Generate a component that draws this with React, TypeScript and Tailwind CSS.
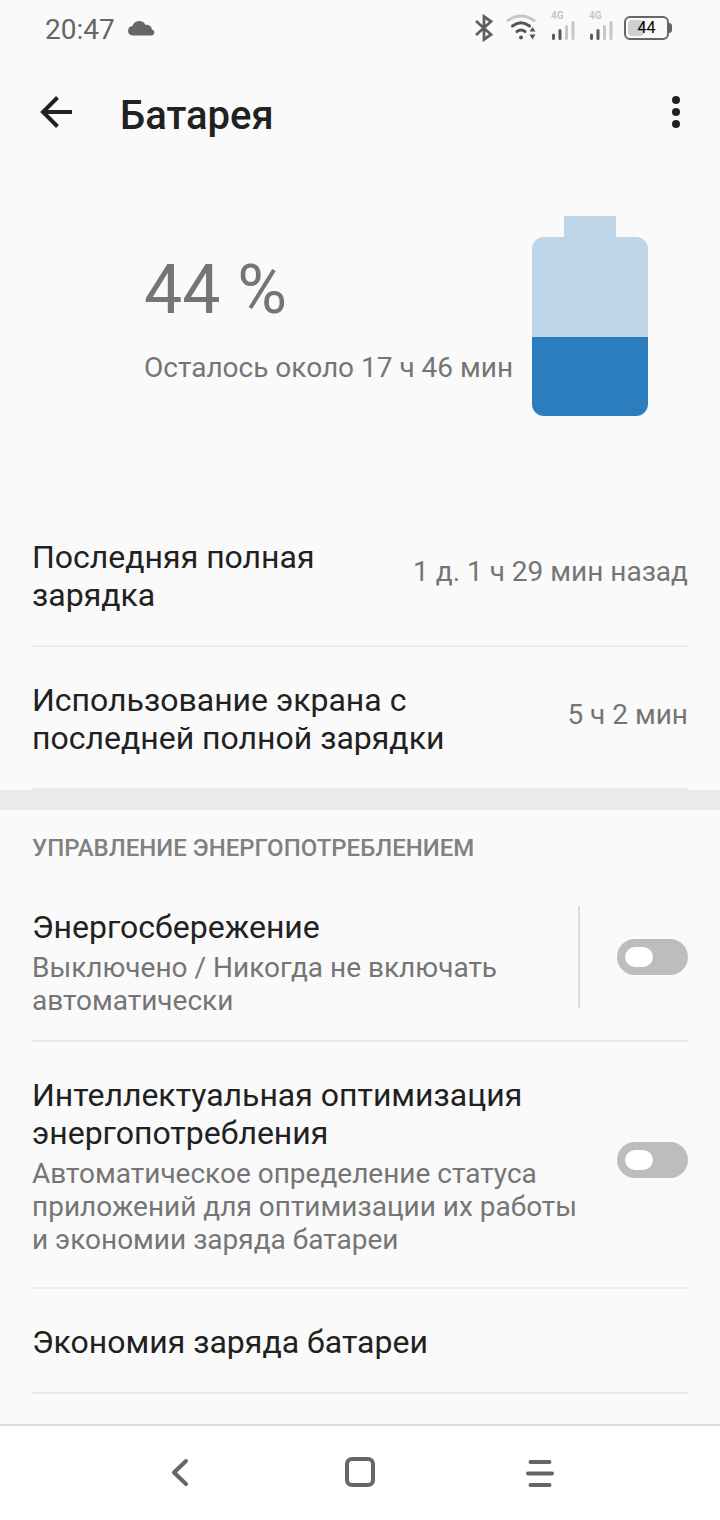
import { useState } from "react";
import type { ReactNode } from "react";

function SignalIcon() {
  return (
    <div className="flex flex-col items-start pb-1">
      <span className="text-[10px] leading-[10px] font-bold text-[#c6c6c6]">4G</span>
      <svg width="24" height="20" viewBox="0 0 24 20" strokeWidth="3" strokeLinecap="round" aria-hidden="true">
        <path d="M2.500 17.500V14M9 17.500V9.500" stroke="#5a5a5a" />
        <path d="M15.500 17.500V5.500M22 17.500V1.500" stroke="#c6c6c6" />
      </svg>
    </div>
  );
}

function StatusBar() {
  return (
    <div className="flex h-14 items-center justify-between pr-12 pl-[45px] text-[#666666]">
      <div className="flex items-center gap-3">
        <span className="pt-1 text-[28px] leading-8">20:47</span>
        <svg width="28" height="16" viewBox="0 0 28 16" fill="currentColor" aria-hidden="true">
          <path d="M5 15.500A4.800 4.800 0 0 1 5.500 6A7 7 0 0 1 18.500 5A5.300 5.300 0 0 1 25 9.500A3.100 3.100 0 0 1 25 15.500Z" />
        </svg>
      </div>

      <div className="flex items-center">
        <svg width="20" height="28" viewBox="0 0 20 28" fill="none" stroke="#5f5f5f" strokeWidth="2.800" aria-hidden="true">
          <path d="M2 7L17 20.500L10 25.500V2.500L17 7.500L2 21" />
        </svg>
        <svg className="ml-3" width="32" height="28" viewBox="0 0 32 28" fill="none" strokeLinecap="round" aria-hidden="true">
          <path d="M2 6.500Q15 -2.500 28 6.500" stroke="#c6c6c6" strokeWidth="3" />
          <path d="M6.500 12Q15 5.500 23.500 12" stroke="#555555" strokeWidth="3" />
          <path d="M11 17.500Q15 14.500 19 17.500" stroke="#555555" strokeWidth="3" />
          <circle cx="15" cy="23.500" r="2" fill="#555555" />
          <path d="M26.500 13L29.500 17.500H23.500ZM26.500 25.500L29.500 20.500H23.500Z" fill="#555555" />
        </svg>
        <div className="ml-[13px] flex gap-[14px]">
          <SignalIcon />
          <SignalIcon />
        </div>
        <div className="ml-[11px] flex items-center">
          <div className="relative flex h-6 w-[45px] items-center justify-center rounded-md border-2 border-[#666666] text-base leading-5 text-black">
            <div className="absolute inset-y-[2px] left-[2px] w-4 rounded-sm bg-[#d0d0d0]" />
            <span className="relative">44</span>
          </div>
          <div className="h-[10px] w-[3px] rounded-r-sm bg-[#666666]" />
        </div>
      </div>
    </div>
  );
}

function Header() {
  return (
    <header className="flex h-28 items-center justify-between px-8 text-[#212121]">
      <div className="flex items-center gap-10">
        <button type="button" aria-label="Назад">
          <svg width="48" height="48" viewBox="0 0 48 48" fill="none" stroke="currentColor" strokeWidth="4" aria-hidden="true">
            <path d="M40 24H11M25.500 9.500L11 24L25.500 38.500" />
          </svg>
        </button>
        <h1 className="pt-2 text-[40px] leading-12 font-medium">Батарея</h1>
      </div>
      <button type="button" aria-label="Ещё">
        <svg width="24" height="48" viewBox="0 0 24 48" fill="currentColor" aria-hidden="true">
          <circle cx="12" cy="12" r="4" />
          <circle cx="12" cy="24" r="4" />
          <circle cx="12" cy="36" r="4" />
        </svg>
      </button>
    </header>
  );
}

function BatterySummary() {
  return (
    <section className="flex items-center justify-between pt-12 pr-[72px] pb-[88px] pl-36 text-[#757575]">
      <div className="pt-[2px]">
        <div className="text-[68px] leading-20">44 %</div>
        <div className="mt-[22px] text-[28px] leading-8">Осталось около 17 ч 46 мин</div>
      </div>
      <svg width="116" height="200" viewBox="0 0 116 200" aria-hidden="true">
        <path d="M32 0H84V21H104A12 12 0 0 1 116 33V121H0V33A12 12 0 0 1 12 21H32Z" fill="#bdd5e7" />
        <path d="M0 121H116V188A12 12 0 0 1 104 200H12A12 12 0 0 1 0 188Z" fill="#2c7dbe" />
      </svg>
    </section>
  );
}

function InfoRow({ title, value }: { title: string; value: string }) {
  return (
    <div className="mx-8 flex items-center justify-between gap-8 border-b-2 border-[#ebebeb] pt-[34px] pb-[31px]">
      <div className="max-w-[420px] text-[32px] leading-[38px] text-[#212121]">{title}</div>
      <div className="shrink-0 pb-2 text-[28px] leading-8 text-[#757575]">{value}</div>
    </div>
  );
}

function Switch({ id }: { id: string }) {
  const [on, setOn] = useState(false);

  return (
    <label htmlFor={id} className="flex shrink-0 cursor-pointer">
      <input
        id={id}
        type="checkbox"
        role="switch"
        aria-labelledby={`${id}-title`}
        className="peer sr-only"
        checked={on}
        onChange={() => setOn(!on)}
      />
      <span className="flex h-9 w-[71px] items-center rounded-full bg-[#bdbdbd] px-2 peer-checked:justify-end peer-checked:bg-[#2c7dbe]">
        <span className="h-5 w-7 rounded-full bg-white" />
      </span>
    </label>
  );
}

function SettingText({ id, title, children }: { id: string; title: string; children: ReactNode }) {
  return (
    <div className="flex-1 pt-[2px]">
      <div id={`${id}-title`} className="text-[32px] leading-[38px] text-[#212121]">
        {title}
      </div>
      <div className="mt-[5px] text-[28px] leading-[33px] text-[#757575]">{children}</div>
    </div>
  );
}

function NavBar() {
  return (
    <nav className="flex h-24 items-center justify-center gap-[132px] border-t-2 border-[#dadada] bg-white text-[#666666]">
      <button type="button" aria-label="Назад">
        <svg width="48" height="48" viewBox="0 0 48 48" fill="none" stroke="currentColor" strokeWidth="4" strokeLinecap="round" strokeLinejoin="round" aria-hidden="true">
          <path d="M30 12L18 23.500L30 35" />
        </svg>
      </button>
      <button type="button" aria-label="Домой">
        <svg width="48" height="48" viewBox="0 0 48 48" fill="none" stroke="currentColor" strokeWidth="4" aria-hidden="true">
          <rect x="11" y="10" width="26" height="26" rx="5" />
        </svg>
      </button>
      <button type="button" aria-label="Недавние">
        <svg width="48" height="48" viewBox="0 0 48 48" fill="none" stroke="currentColor" strokeWidth="4" strokeLinecap="round" aria-hidden="true">
          <path d="M14.500 13H33.500M12 24.500H36M14.500 36H33.500" />
        </svg>
      </button>
    </nav>
  );
}

export default function App() {
  return (
    <div className="flex min-h-screen flex-col bg-[#fafafa] font-[Roboto,sans-serif]">
      <StatusBar />
      <Header />

      <main className="flex-1">
        <BatterySummary />

        <InfoRow title="Последняя полная зарядка" value="1 д. 1 ч 29 мин назад" />
        <InfoRow title="Использование экрана с последней полной зарядки" value="5 ч 2 мин" />

        <div className="h-5 bg-[#ebebeb]" />

        <h2 className="px-8 py-6 text-2xl leading-7 font-medium text-[#808080]">УПРАВЛЕНИЕ ЭНЕРГОПОТРЕБЛЕНИЕМ</h2>

        {/* Power saving */}
        <div className="mx-8 flex items-start border-b-2 border-[#ebebeb] pt-5 pb-[23px]">
          <SettingText id="saver" title="Энергосбережение">
            Выключено / Никогда не включать автоматически
          </SettingText>
          <div className="ml-4 flex items-center gap-[37px]">
            <div className="h-[102px] w-[2px] bg-[#dcdcdc]" />
            <Switch id="saver" />
          </div>
        </div>

        {/* Smart optimisation */}
        <div className="mx-8 flex items-center gap-8 border-b-2 border-[#ebebeb] pt-8 pb-[31px]">
          <SettingText id="smart" title="Интеллектуальная оптимизация энергопотребления">
            Автоматическое определение статуса приложений для оптимизации их работы и экономии заряда батареи
          </SettingText>
          <div className="pb-[10px]">
            <Switch id="smart" />
          </div>
        </div>

        <a href="#economy" className="mx-8 block border-b-2 border-[#ebebeb] pt-[34px] pb-[31px] text-[32px] leading-[38px] text-[#212121]">
          Экономия заряда батареи
        </a>
      </main>

      <NavBar />
    </div>
  );
}
